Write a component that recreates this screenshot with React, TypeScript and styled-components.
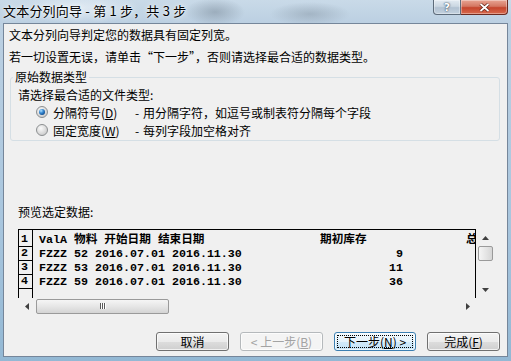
import React from 'react';
import styled, { createGlobalStyle } from 'styled-components';

const GlobalStyle = createGlobalStyle`
  html, body {
    margin: 0;
    padding: 0;
  }
  body {
    width: 511px;
    height: 361px;
    overflow: hidden;
    font-family: "Noto Sans CJK SC", "Noto Sans", sans-serif;
    color: #000;
  }
`;

const Window = styled.div`
  width: 511px;
  height: 361px;
  box-sizing: border-box;
  display: flex;
  flex-direction: column;
  padding: 0 3px 4px 3px;
  background:
    radial-gradient(ellipse 30px 14px at 215px 12px, rgba(110, 125, 140, 0.45), transparent),
    radial-gradient(ellipse 40px 12px at 310px 14px, rgba(120, 135, 150, 0.4), transparent),
    radial-gradient(ellipse 60px 16px at 80px 8px, rgba(235, 242, 248, 0.7), transparent),
    linear-gradient(to bottom, #c9dae8 0px, #bcd0e2 22px, #a9c6de 60%, #93b8d4 100%);
`;

const TitleBar = styled.div`
  height: 23px;
  display: flex;
  justify-content: space-between;
  align-items: flex-start;
`;

const Title = styled.div`
  font-size: 13px;
  line-height: 22px;
  letter-spacing: 0.2px;
  text-shadow: 0 0 6px rgba(255, 255, 255, 0.9), 0 0 2px rgba(255, 255, 255, 0.9);
`;

const CaptionButtons = styled.div`
  display: flex;
`;

const CaptionButton = styled.div<{ $close?: boolean }>`
  width: ${(p) => (p.$close ? 47 : 28)}px;
  height: 15px;
  box-sizing: border-box;
  display: flex;
  align-items: center;
  justify-content: center;
  border: 1px solid ${(p) => (p.$close ? '#6b2a20' : '#5d6b7a')};
  border-top: none;
  border-left: ${(p) => (p.$close ? 'none' : undefined)};
  border-radius: ${(p) => (p.$close ? '0 0 4px 0' : '0 0 0 4px')};
  background: ${(p) =>
    p.$close
      ? 'linear-gradient(to bottom, #e8a593 0%, #d47762 45%, #c5452c 55%, #d86a4e 100%)'
      : 'linear-gradient(to bottom, #e3ebf2 0%, #cbd7e2 45%, #b2c2d2 55%, #c3d1de 100%)'};
  box-shadow: inset 0 0 0 1px rgba(255, 255, 255, 0.35);
`;

const HelpGlyph = styled.span`
  font-family: "DejaVu Sans", sans-serif;
  font-weight: bold;
  font-size: 11px;
  line-height: 13px;
  color: #fff;
  text-shadow: 0 0 1px #34495e, 0 0 2px #34495e;
`;

const Client = styled.div`
  flex: 1;
  display: flex;
  flex-direction: column;
  background: #f0f0f0;
  border: 1px solid #75869a;
`;

const Intro = styled.div`
  padding-left: 5px;
  font-size: 12px;
  line-height: 22px;
`;

const Group = styled.fieldset`
  margin: 2px 7px 0 6px;
  padding: 0 0 1px 7px;
  min-inline-size: 0;
  border: 1px solid #d5dfe5;
  border-radius: 3px;
  font-size: 12px;
`;

const GroupLegend = styled.legend`
  margin-left: -5px;
  padding: 0 2px;
  line-height: 14px;
`;

const Prompt = styled.div`
  margin-top: 2px;
  line-height: 17px;
`;

const RadioRow = styled.div`
  display: flex;
  align-items: center;
  height: 18px;
  padding-left: 18px;
`;

const RadioLabel = styled.span`
  width: 82px;
  margin-left: 5px;
`;

const Dash = styled.span`
  width: 8px;
`;

const PreviewLabel = styled.div`
  margin: 64px 0 10px 14px;
  font-size: 12px;
  line-height: 14px;
`;

const Preview = styled.div`
  margin-left: 14px;
  display: grid;
  grid-template-columns: 458px 18px;
  grid-template-rows: 69px 16px;
`;

const DataArea = styled.div`
  box-sizing: border-box;
  border: 1px solid #000;
  border-bottom: none;
  background: #f0f0f0;
  display: flex;
  overflow: hidden;
  font-family: "Liberation Mono", "Noto Sans CJK SC", monospace;
  font-size: 11.67px;
  font-weight: bold;
`;

const RowNums = styled.div`
  width: 14px;
  box-sizing: border-box;
  border-right: 1px solid #000;
  padding-top: 3px;
  flex-shrink: 0;
`;

const RowNum = styled.div`
  height: 13px;
  line-height: 13px;
  padding-left: 2px;
  border-bottom: 1px solid #000;
`;

const Rows = styled.div`
  padding: 3px 0 0 6px;
  flex: 1;
  min-width: 0;
`;

const DataRow = styled.div`
  display: grid;
  grid-template-columns: 281px 83px 1fr;
  height: 14px;
  line-height: 14px;
  white-space: pre;
`;

const NumCell = styled.span`
  text-align: right;
`;

const TailCell = styled.span`
  padding-left: 63px;
`;

const VScroll = styled.div`
  display: flex;
  flex-direction: column;
  align-items: center;
  background: #f0f0f0;
`;

const ArrowBox = styled.div<{ $w: number; $h: number }>`
  width: ${(p) => p.$w}px;
  height: ${(p) => p.$h}px;
  display: flex;
  align-items: center;
  justify-content: center;
  flex-shrink: 0;
`;

const VThumb = styled.div`
  width: 15px;
  height: 15px;
  box-sizing: border-box;
  border: 1px solid #9a9a9a;
  border-radius: 2px;
  background: linear-gradient(to right, #f5f5f5, #e6e6e6 50%, #d6d6d6);
`;

const VTrack = styled.div`
  flex: 1;
`;

const HScroll = styled.div`
  display: flex;
  align-items: center;
  background: #f0f0f0;
`;

const HThumb = styled.div`
  width: 133px;
  height: 15px;
  margin-left: 1px;
  box-sizing: border-box;
  border: 1px solid #9a9a9a;
  border-radius: 2px;
  background: linear-gradient(to bottom, #f5f5f5, #e6e6e6 50%, #d4d4d4);
  display: flex;
  align-items: center;
  justify-content: center;
`;

const Grip = styled.div`
  display: flex;
  gap: 1px;
  span {
    width: 1px;
    height: 6px;
    background: #5a5a5a;
    box-shadow: 1px 0 0 #fff;
  }
`;

const HTrack = styled.div`
  flex: 1;
`;

const ButtonRow = styled.div`
  margin-top: 18px;
  padding-right: 7px;
  display: flex;
  justify-content: flex-end;
  gap: 11px;
`;

const Button = styled.div<{ $w: number; $variant?: 'disabled' | 'default' }>`
  width: ${(p) => p.$w}px;
  height: 19px;
  box-sizing: border-box;
  display: flex;
  align-items: center;
  justify-content: center;
  font-size: 12px;
  border-radius: 3px;
  border: 1px solid
    ${(p) => (p.$variant === 'default' ? '#3c7fb1' : p.$variant === 'disabled' ? '#b5b9bc' : '#707070')};
  color: ${(p) => (p.$variant === 'disabled' ? '#a3a3a3' : '#000')};
  background: ${(p) =>
    p.$variant === 'disabled'
      ? '#f4f4f4'
      : p.$variant === 'default'
      ? 'linear-gradient(to bottom, #f2f9fd 0%, #e6f3fb 50%, #d2eafa 51%, #c4e3f7 100%)'
      : 'linear-gradient(to bottom, #f3f3f3 0%, #ebebeb 50%, #dddddd 51%, #cfcfcf 100%)'};
  box-shadow: inset 0 0 0 1px rgba(255, 255, 255, 0.7);
`;

const FocusRect = styled.span`
  display: flex;
  align-items: center;
  justify-content: center;
  width: calc(100% - 6px);
  height: calc(100% - 6px);
  box-sizing: border-box;
  outline: 1px dotted #000;
`;

const Arrow = ({ dir }: { dir: 'up' | 'down' | 'left' | 'right' }) => {
  const pts = {
    up: '0,4 3.5,0 7,4',
    down: '0,0 7,0 3.5,4',
    left: '4,0 4,7 0,3.5',
    right: '0,0 0,7 4,3.5',
  }[dir];
  const vertical = dir === 'up' || dir === 'down';
  return (
    <svg width={vertical ? 7 : 4} height={vertical ? 4 : 7}>
      <polygon points={pts} fill="#404040" />
    </svg>
  );
};

const Radio = ({ checked, id }: { checked?: boolean; id: string }) => (
  <svg width="12" height="12" viewBox="0 0 12 12">
    <defs>
      <radialGradient id={`${id}-bg`} cx="0.4" cy="0.35" r="0.7">
        <stop offset="0" stopColor="#fbfbfb" />
        <stop offset="1" stopColor="#c8c8c8" />
      </radialGradient>
      <radialGradient id={`${id}-dot`} cx="0.35" cy="0.3" r="0.75">
        <stop offset="0" stopColor="#b4e2ff" />
        <stop offset="0.45" stopColor="#3c8ed6" />
        <stop offset="1" stopColor="#0e4a8c" />
      </radialGradient>
    </defs>
    <circle cx="6" cy="6" r="5.5" fill={`url(#${id}-bg)`} stroke="#8c8f91" />
    {checked && <circle cx="6" cy="6" r="3" fill={`url(#${id}-dot)`} />}
  </svg>
);

const rows = [
  { n: '1', a: 'ValA 物料 开始日期 结束日期', b: '期初库存', c: '总' },
  { n: '2', a: 'FZZZ 52 2016.07.01 2016.11.30', num: '9' },
  { n: '3', a: 'FZZZ 53 2016.07.01 2016.11.30', num: '11' },
  { n: '4', a: 'FZZZ 59 2016.07.01 2016.11.30', num: '36' },
];

const App = () => (
  <>
    <GlobalStyle />
    <Window>
      <TitleBar>
        <Title>文本分列向导 - 第 1 步，共 3 步</Title>
        <CaptionButtons>
          <CaptionButton>
            <HelpGlyph>?</HelpGlyph>
          </CaptionButton>
          <CaptionButton $close>
            <svg width="11" height="9" viewBox="0 0 11 9">
              <path d="M1.5 1 L9.5 8 M9.5 1 L1.5 8" stroke="#5a1d12" strokeWidth="3.2" />
              <path d="M1.5 1 L9.5 8 M9.5 1 L1.5 8" stroke="#fff" strokeWidth="1.8" />
            </svg>
          </CaptionButton>
        </CaptionButtons>
      </TitleBar>
      <Client>
        <Intro>
          <div>文本分列向导判定您的数据具有固定列宽。</div>
          <div>若一切设置无误，请单击“下一步”，否则请选择最合适的数据类型。</div>
        </Intro>
        <Group>
          <GroupLegend>原始数据类型</GroupLegend>
          <Prompt>请选择最合适的文件类型:</Prompt>
          <RadioRow>
            <Radio checked id="r1" />
            <RadioLabel>
              分隔符号(<u>D</u>)
            </RadioLabel>
            <Dash>-</Dash>
            <span>用分隔字符，如逗号或制表符分隔每个字段</span>
          </RadioRow>
          <RadioRow>
            <Radio id="r2" />
            <RadioLabel>
              固定宽度(<u>W</u>)
            </RadioLabel>
            <Dash>-</Dash>
            <span>每列字段加空格对齐</span>
          </RadioRow>
        </Group>
        <PreviewLabel>预览选定数据:</PreviewLabel>
        <Preview>
          <DataArea>
            <RowNums>
              {rows.map((r) => (
                <RowNum key={r.n}>{r.n}</RowNum>
              ))}
              <RowNum />
            </RowNums>
            <Rows>
              {rows.map((r) => (
                <DataRow key={r.n}>
                  <span>{r.a}</span>
                  {r.b ? <span>{r.b}</span> : <NumCell>{r.num}</NumCell>}
                  {r.c ? <TailCell>{r.c}</TailCell> : <span />}
                </DataRow>
              ))}
            </Rows>
          </DataArea>
          <VScroll>
            <ArrowBox $w={18} $h={17}>
              <Arrow dir="up" />
            </ArrowBox>
            <VThumb />
            <VTrack />
            <ArrowBox $w={18} $h={17}>
              <Arrow dir="down" />
            </ArrowBox>
          </VScroll>
          <HScroll>
            <ArrowBox $w={17} $h={16}>
              <Arrow dir="left" />
            </ArrowBox>
            <HThumb>
              <Grip>
                <span />
                <span />
                <span />
              </Grip>
            </HThumb>
            <HTrack />
            <ArrowBox $w={17} $h={16}>
              <Arrow dir="right" />
            </ArrowBox>
          </HScroll>
          <div />
        </Preview>
        <ButtonRow>
          <Button $w={73}>取消</Button>
          <Button $w={83} $variant="disabled">
            &lt; 上一步(<u>B</u>)
          </Button>
          <Button $w={82} $variant="default">
            <FocusRect>
              下一步(<u>N</u>) &gt;
            </FocusRect>
          </Button>
          <Button $w={73}>
            完成(<u>F</u>)
          </Button>
        </ButtonRow>
      </Client>
    </Window>
  </>
);

export default App;
